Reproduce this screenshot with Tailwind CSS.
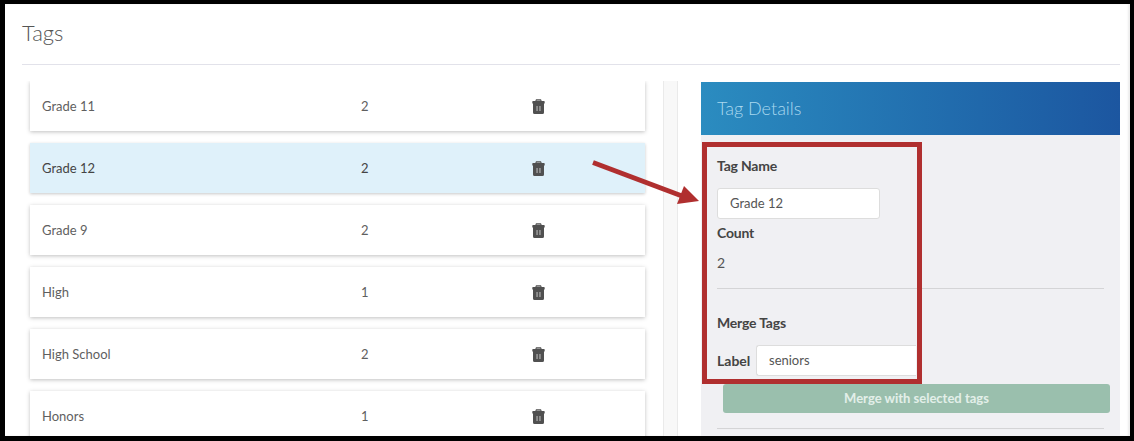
<!DOCTYPE html>
<html lang="en">
  <head>
    <meta charset="UTF-8" />
    <title>Tags</title>
    <script src="https://cdn.jsdelivr.net/npm/@tailwindcss/browser@4"></script>
  </head>
  <body class="bg-black w-[1134px] h-[441px] overflow-hidden font-['Lato',sans-serif]">
    <!-- Screenshot frame -->
    <div class="relative ml-[5px] mt-[4px] w-[1125px] h-[432px] bg-white overflow-hidden shadow-[inset_-2px_0_2px_rgba(0,0,0,0.08)]">
      <!-- Page title -->
      <div class="ml-[17px] mr-[10px] h-[61px] border-b border-[#e2e2ea] pt-[14px]">
        <h1 class="text-[22px] leading-[30px] font-light text-[#555]">Tags</h1>
      </div>

      <div class="flex mt-[16px] ml-[25px]">
        <!-- Tag list -->
        <div class="w-[615px] flex flex-col gap-[12px] shrink-0 [clip-path:inset(0_-10px_-10px_-10px)]">
          <div class="h-[50px] shrink-0 bg-white shadow-[0_1px_4px_rgba(0,0,0,0.25)] flex items-center text-[13px] text-[#5f5f5f]">
            <span class="w-[331px] pl-[12px] pt-[2px]">Grade 11</span>
            <span class="w-[171px] pt-[2px]">2</span>
            <svg class="w-[13px] h-[15px]" viewBox="0 0 13 15"><path fill="#505050" d="M4 .3h5L9.700 2h2.300a.7.700 0 0 1 .7.700V4.500H.3V2.700A.7.700 0 0 1 1 2h2.300zM1 4.500h11v9a1.500 1.500 0 0 1-1.500 1.500h-8A1.500 1.500 0 0 1 1 13.500z"/><path fill="#a8a8a8" d="M4.400 7h1.300v5H4.400zM7.300 7h1.300v5H7.300zM4.700 1.200h3.600l.3.800H4.400z"/></svg>
          </div>
          <div class="h-[50px] shrink-0 bg-[#dff1fa] shadow-[0_1px_3px_rgba(0,0,0,0.22)] flex items-center text-[13px] text-[#444]">
            <span class="w-[331px] pl-[12px] pt-[2px]">Grade 12</span>
            <span class="w-[171px] pt-[2px]">2</span>
            <svg class="w-[13px] h-[15px]" viewBox="0 0 13 15"><path fill="#505050" d="M4 .3h5L9.700 2h2.300a.7.700 0 0 1 .7.700V4.500H.3V2.700A.7.700 0 0 1 1 2h2.300zM1 4.500h11v9a1.500 1.500 0 0 1-1.500 1.500h-8A1.500 1.500 0 0 1 1 13.500z"/><path fill="#a8a8a8" d="M4.400 7h1.300v5H4.400zM7.300 7h1.300v5H7.300zM4.700 1.200h3.600l.3.800H4.400z"/></svg>
          </div>
          <div class="h-[50px] shrink-0 bg-white shadow-[0_1px_4px_rgba(0,0,0,0.25)] flex items-center text-[13px] text-[#5f5f5f]">
            <span class="w-[331px] pl-[12px] pt-[2px]">Grade 9</span>
            <span class="w-[171px] pt-[2px]">2</span>
            <svg class="w-[13px] h-[15px]" viewBox="0 0 13 15"><path fill="#505050" d="M4 .3h5L9.700 2h2.300a.7.700 0 0 1 .7.700V4.500H.3V2.700A.7.700 0 0 1 1 2h2.300zM1 4.500h11v9a1.500 1.500 0 0 1-1.500 1.500h-8A1.500 1.500 0 0 1 1 13.500z"/><path fill="#a8a8a8" d="M4.400 7h1.300v5H4.400zM7.300 7h1.300v5H7.300zM4.700 1.200h3.600l.3.800H4.400z"/></svg>
          </div>
          <div class="h-[50px] shrink-0 bg-white shadow-[0_1px_4px_rgba(0,0,0,0.25)] flex items-center text-[13px] text-[#5f5f5f]">
            <span class="w-[331px] pl-[12px] pt-[2px]">High</span>
            <span class="w-[171px] pt-[2px]">1</span>
            <svg class="w-[13px] h-[15px]" viewBox="0 0 13 15"><path fill="#505050" d="M4 .3h5L9.700 2h2.300a.7.700 0 0 1 .7.700V4.500H.3V2.700A.7.700 0 0 1 1 2h2.300zM1 4.500h11v9a1.500 1.500 0 0 1-1.500 1.500h-8A1.500 1.500 0 0 1 1 13.500z"/><path fill="#a8a8a8" d="M4.400 7h1.300v5H4.400zM7.300 7h1.300v5H7.300zM4.700 1.200h3.600l.3.800H4.400z"/></svg>
          </div>
          <div class="h-[50px] shrink-0 bg-white shadow-[0_1px_4px_rgba(0,0,0,0.25)] flex items-center text-[13px] text-[#5f5f5f]">
            <span class="w-[331px] pl-[12px] pt-[2px]">High School</span>
            <span class="w-[171px] pt-[2px]">2</span>
            <svg class="w-[13px] h-[15px]" viewBox="0 0 13 15"><path fill="#505050" d="M4 .3h5L9.700 2h2.300a.7.700 0 0 1 .7.700V4.500H.3V2.700A.7.700 0 0 1 1 2h2.300zM1 4.500h11v9a1.500 1.500 0 0 1-1.500 1.500h-8A1.500 1.500 0 0 1 1 13.500z"/><path fill="#a8a8a8" d="M4.400 7h1.300v5H4.400zM7.300 7h1.300v5H7.300zM4.700 1.200h3.600l.3.800H4.400z"/></svg>
          </div>
          <div class="h-[50px] shrink-0 bg-white shadow-[0_1px_4px_rgba(0,0,0,0.25)] flex items-center text-[13px] text-[#5f5f5f]">
            <span class="w-[331px] pl-[12px] pt-[2px]">Honors</span>
            <span class="w-[171px] pt-[2px]">1</span>
            <svg class="w-[13px] h-[15px]" viewBox="0 0 13 15"><path fill="#505050" d="M4 .3h5L9.700 2h2.300a.7.700 0 0 1 .7.700V4.500H.3V2.700A.7.700 0 0 1 1 2h2.300zM1 4.500h11v9a1.500 1.500 0 0 1-1.500 1.500h-8A1.500 1.500 0 0 1 1 13.500z"/><path fill="#a8a8a8" d="M4.400 7h1.300v5H4.400zM7.300 7h1.300v5H7.300zM4.700 1.200h3.600l.3.800H4.400z"/></svg>
          </div>
        </div>

        <!-- Scroll track -->
        <div class="ml-[18px] w-[15px] h-[360px] bg-[#f8f8f8] border-x border-[#eaeaea] shrink-0"></div>

        <!-- Tag details panel -->
        <div class="ml-[23px] mt-[1px] w-[419px] h-[360px] bg-[#f0f0f3] shrink-0">
          <div class="h-[53px] bg-gradient-to-r from-[#2b8cc0] to-[#1c56a0] pl-[16px] flex items-center text-[18px] font-light text-[#a9d8ef]">Tag Details</div>
          <div class="px-[16px] pt-[21px] text-[#444] text-[14px]">
            <div class="font-bold leading-[20px] tracking-[-0.2px]">Tag Name</div>
            <div class="mt-[12px] w-[163px] h-[31px] bg-white border border-[#ddd] rounded-[3px] pl-[12px] flex items-center text-[13px] text-[#555]">Grade 12</div>
            <div class="mt-[4px] font-bold leading-[20px] tracking-[-0.2px]">Count</div>
            <div class="mt-[10px] leading-[20px] text-[#555]">2</div>
            <div class="mt-[15px] border-t border-[#d4d4d6]"></div>
            <div class="mt-[24px] font-bold leading-[20px] tracking-[-0.2px]">Merge Tags</div>
            <div class="mt-[12px] flex items-center">
              <span class="font-bold w-[39px]">Label</span>
              <div class="w-[160px] h-[31px] bg-white border border-[#ddd] border-r-0 rounded-l-[3px] pl-[12px] flex items-center text-[13px] text-[#555]">seniors</div>
            </div>
            <div class="mt-[8px] ml-[6px] w-[387px] h-[29px] bg-[#9abfad] rounded-[3px] flex items-center justify-center text-[13px] font-bold text-[#e3efe9]">Merge with selected tags</div>
            <div class="mt-[15px] border-t border-[#d4d4d6]"></div>
          </div>
        </div>
      </div>

      <!-- Red callout box and arrow drawn over the screenshot -->
      <div class="absolute left-[697px] top-[138px] w-[220px] h-[242px] border-[5px] border-[#b02f2f]"></div>
      <svg class="absolute left-[585px] top-[155px]" width="116" height="50" viewBox="0 0 116 50">
        <path d="M3 3.500L92 37" stroke="#b02f2f" stroke-width="5" fill="none"/>
        <path d="M109 42L87 45L94 27z" fill="#b02f2f"/>
      </svg>
    </div>
  </body>
</html>
